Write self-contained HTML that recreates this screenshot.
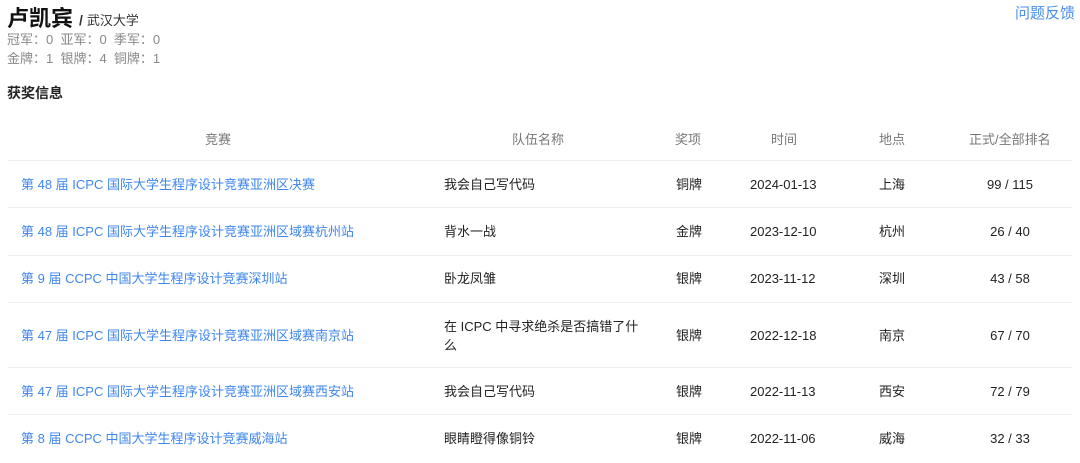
<!DOCTYPE html>
<html><head><meta charset="utf-8"><style>
body{margin:0;width:1080px;height:463px;overflow:hidden;background:#fff;font-family:"Liberation Sans","Noto Sans CJK SC",sans-serif;color:#222;}
.a{position:absolute;white-space:nowrap}
.name{left:7px;top:5px;font-size:22px;line-height:28px;font-weight:bold;color:#111}
.uni{left:79px;top:10px;font-size:13px;line-height:20px;color:#333}
.st{left:7px;font-size:13px;line-height:20px;color:#888}
.fb{left:1015px;top:4px;font-size:15px;line-height:20px;color:#4a8ff0}
.h{font-size:14px;line-height:20px;font-weight:bold;left:7px;top:83px;color:#222}
.th{font-size:13px;line-height:20px;color:#777;top:130px}
.line{position:absolute;left:8px;width:1064px;height:1px;background:#eceef2}
.c{position:absolute;font-size:13px;line-height:20px;color:#222;white-space:nowrap}
.l{color:#3f86ee}
</style></head><body>
<div class="a name">卢凯宾</div>
<div class="a uni"><b style="font-size:14px;margin-right:4px">/</b>武汉大学</div>
<div class="a st" style="top:30px">冠军：0&nbsp; 亚军：0&nbsp; 季军：0</div>
<div class="a st" style="top:49px">金牌：1&nbsp; 银牌：4&nbsp; 铜牌：1</div>
<div class="a fb">问题反馈</div>
<div class="a h">获奖信息</div>
<div class="a th" style="left:205px">竞赛</div>
<div class="a th" style="left:512px">队伍名称</div>
<div class="a th" style="left:675px">奖项</div>
<div class="a th" style="left:771px">时间</div>
<div class="a th" style="left:879px">地点</div>
<div class="a th" style="left:969px">正式/全部排名</div>
<div class="line" style="top:160px"></div>
<div class="line" style="top:207px"></div>
<div class="line" style="top:255px"></div>
<div class="line" style="top:302px"></div>
<div class="line" style="top:367px"></div>
<div class="line" style="top:414px"></div>

<div class="c l" style="left:21px;top:175px">第 48 届 ICPC 国际大学生程序设计竞赛亚洲区决赛</div>
<div class="c" style="left:444px;top:175px">我会自己写代码</div>
<div class="c" style="left:676px;top:175px">铜牌</div>
<div class="c" style="left:750px;top:175px">2024-01-13</div>
<div class="c" style="left:879px;top:175px">上海</div>
<div class="c" style="left:970px;top:175px;width:80px;text-align:center">99 / 115</div>

<div class="c l" style="left:21px;top:222px">第 48 届 ICPC 国际大学生程序设计竞赛亚洲区域赛杭州站</div>
<div class="c" style="left:444px;top:222px">背水一战</div>
<div class="c" style="left:676px;top:222px">金牌</div>
<div class="c" style="left:750px;top:222px">2023-12-10</div>
<div class="c" style="left:879px;top:222px">杭州</div>
<div class="c" style="left:970px;top:222px;width:80px;text-align:center">26 / 40</div>

<div class="c l" style="left:21px;top:269px">第 9 届 CCPC 中国大学生程序设计竞赛深圳站</div>
<div class="c" style="left:444px;top:269px">卧龙凤雏</div>
<div class="c" style="left:676px;top:269px">银牌</div>
<div class="c" style="left:750px;top:269px">2023-11-12</div>
<div class="c" style="left:879px;top:269px">深圳</div>
<div class="c" style="left:970px;top:269px;width:80px;text-align:center">43 / 58</div>

<div class="c l" style="left:21px;top:326px">第 47 届 ICPC 国际大学生程序设计竞赛亚洲区域赛南京站</div>
<div class="c" style="left:444px;top:317px;line-height:19px">在 ICPC 中寻求绝杀是否搞错了什<br>么</div>
<div class="c" style="left:676px;top:326px">银牌</div>
<div class="c" style="left:750px;top:326px">2022-12-18</div>
<div class="c" style="left:879px;top:326px">南京</div>
<div class="c" style="left:970px;top:326px;width:80px;text-align:center">67 / 70</div>

<div class="c l" style="left:21px;top:382px">第 47 届 ICPC 国际大学生程序设计竞赛亚洲区域赛西安站</div>
<div class="c" style="left:444px;top:382px">我会自己写代码</div>
<div class="c" style="left:676px;top:382px">银牌</div>
<div class="c" style="left:750px;top:382px">2022-11-13</div>
<div class="c" style="left:879px;top:382px">西安</div>
<div class="c" style="left:970px;top:382px;width:80px;text-align:center">72 / 79</div>

<div class="c l" style="left:21px;top:429px">第 8 届 CCPC 中国大学生程序设计竞赛威海站</div>
<div class="c" style="left:444px;top:429px">眼睛瞪得像铜铃</div>
<div class="c" style="left:676px;top:429px">银牌</div>
<div class="c" style="left:750px;top:429px">2022-11-06</div>
<div class="c" style="left:879px;top:429px">威海</div>
<div class="c" style="left:970px;top:429px;width:80px;text-align:center">32 / 33</div>
</body></html>
